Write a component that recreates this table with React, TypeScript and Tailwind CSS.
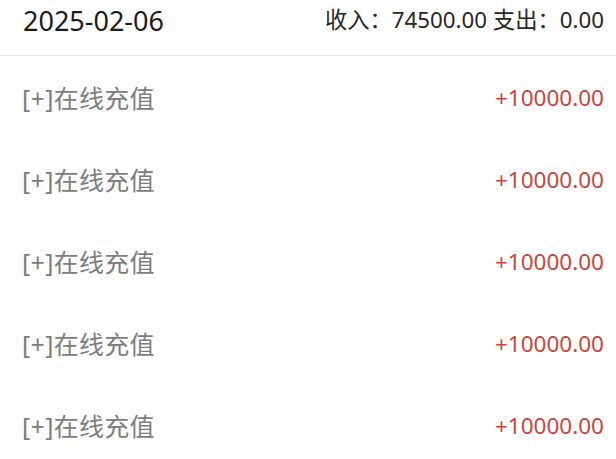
import React from "react";

const font = { fontFamily: '"Noto Sans", "Noto Sans CJK SC", sans-serif' };

export default function App() {
  const rows = [1, 2, 3, 4, 5];
  return (
    <div className="w-[616px] h-[459px] overflow-hidden bg-white" style={font}>
      <div className="flex items-center justify-between h-[56px] pl-[23px] pr-[12px] border-b border-[#e6e6e6]">
        <span className="text-[27px] text-[#1c1c1c] leading-none -mt-[14px]">2025-02-06</span>
        <span className="text-[22.3px] text-[#262626] leading-none -mt-[14px]">收入：74500.00 支出：0.00</span>
      </div>
      {rows.map((r) => (
        <div key={r} className="flex items-center justify-between h-[82px] pl-[22px] pr-[12px] pt-[2px]">
          <span className="text-[25px] tracking-[0.3px] text-[#7d7d7d] leading-none">[+]在线充值</span>
          <span className="text-[22.5px] text-[#c8463d] leading-none">+10000.00</span>
        </div>
      ))}
    </div>
  );
}
